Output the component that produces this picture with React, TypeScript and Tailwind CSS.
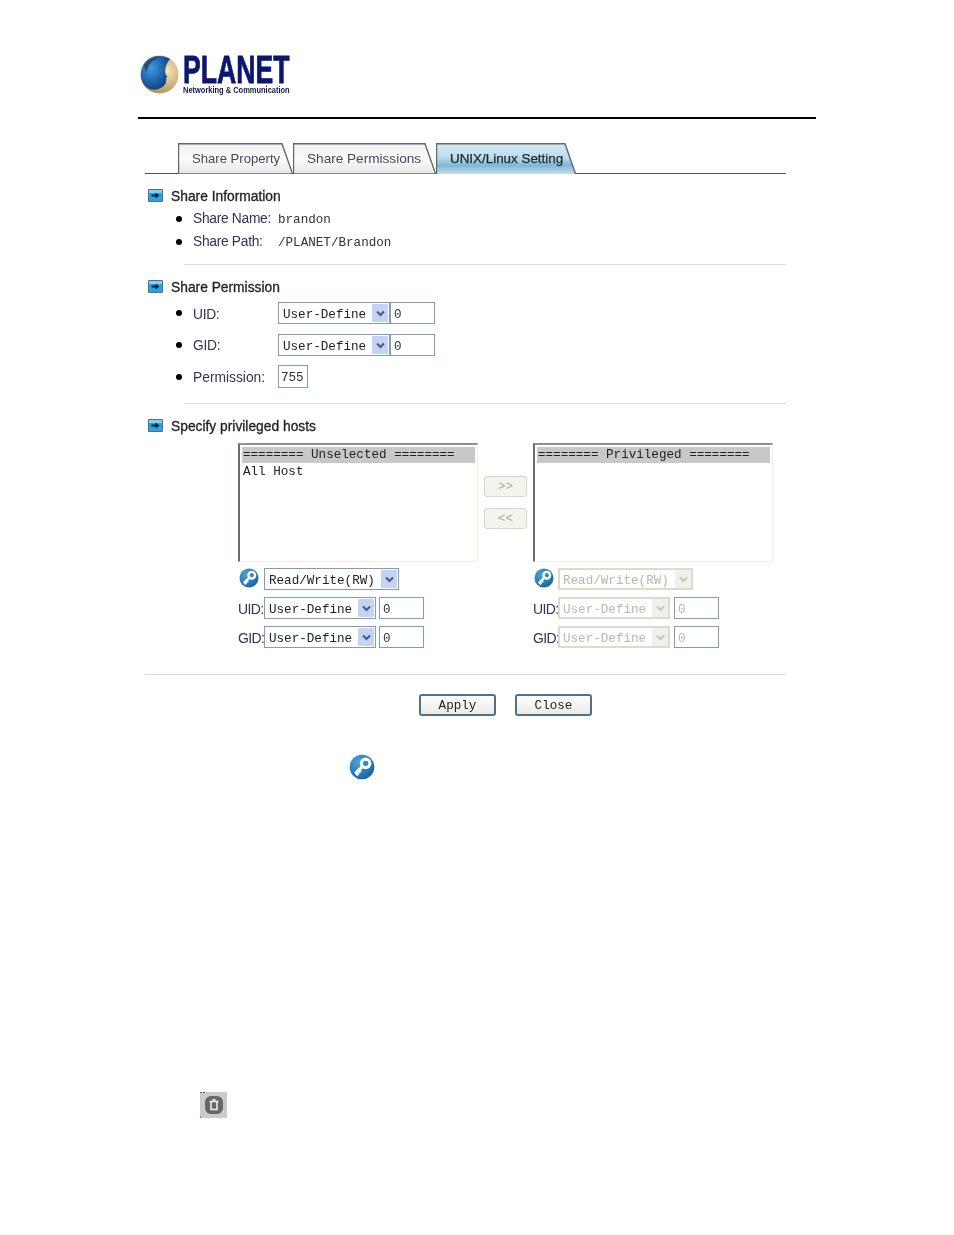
import React from "react";

const mono = "font-['Liberation_Mono',monospace] text-[12.6px]";

function Key({ size = 20, className = "" }: { size?: number; className?: string }) {
  return (
    <svg width={size} height={size} viewBox="0 0 20 20" className={className}>
      <defs>
        <radialGradient id={`k${size}`} cx="35%" cy="30%" r="80%">
          <stop offset="0" stopColor="#4aa3d8" />
          <stop offset="1" stopColor="#0f62a0" />
        </radialGradient>
      </defs>
      <circle cx="10" cy="10" r="9.5" fill={`url(#k${size})`} />
      <circle cx="12.8" cy="7.2" r="3.3" fill="none" stroke="#fff" strokeWidth="2.4" />
      <path d="M10.6 9.3 L4.8 15 M5.4 14.4 L7.2 16.2 M7.4 12.5 L9 14.1" stroke="#fff" strokeWidth="2.4" fill="none" />
    </svg>
  );
}

function HeadIcon() {
  return (
    <svg width="15" height="13" viewBox="0 0 15 13" className="-mt-[2px]">
      <rect x="0" y="0" width="15" height="13" rx="1" fill="#5f6c76" />
      <rect x="1" y="1" width="13" height="11" fill="#25a5e2" />
      <rect x="1" y="1" width="13" height="3" fill="#7fd0f2" />
      <path d="M3.5 5.5 H7.5 V3.5 L11.5 6.5 L7.5 9.5 V7.5 H3.5 Z" fill="#10203a" />
    </svg>
  );
}

function Heading({ children }: { children: React.ReactNode }) {
  return (
    <div className="flex items-center h-5 mt-3 ml-[3px] gap-2 text-[13.8px] text-[#232323] [-webkit-text-stroke:0.3px_#232323]">
      <HeadIcon />
      <span className="pt-[2px]">{children}</span>
    </div>
  );
}

function Row({
  label,
  children,
  className = "",
  labelClass = "",
}: {
  label: string;
  children: React.ReactNode;
  className?: string;
  labelClass?: string;
}) {
  return (
    <div className={`flex items-center ml-[31px] text-[13.8px] text-[#3a2f58] ${className}`}>
      <span className="w-[6px] h-[6px] rounded-full bg-black" />
      <span className={`ml-[11px] w-[85px] shrink-0 ${labelClass}`}>{label}</span>
      {children}
    </div>
  );
}

function Select({ text, width, disabled = false }: { text: string; width: number; disabled?: boolean }) {
  return (
    <div
      style={{ width }}
      className={`flex items-center h-[22px] shrink-0 ${mono} ${
        disabled ? "border-2 border-[#dcdccc] text-[#b8b8b0] pl-[3px]" : "border border-[#7f9db9] text-[#222] pl-[4px] pr-px"
      }`}
    >
      <span className="flex-1 whitespace-pre pt-[4px]">{text}</span>
      <span
        className={`flex items-center justify-center w-[16px] h-[18px] rounded-[1px] ${
          disabled ? "bg-[#f0f0ea]" : "bg-[#c4d2f4]"
        }`}
      >
        <svg width="9" height="7" viewBox="0 0 9 7">
          <path d="M1 1.5 L4.5 5 L8 1.5" fill="none" strokeWidth="2" stroke={disabled ? "#c4c4bc" : "#44598a"} />
        </svg>
      </span>
    </div>
  );
}

function Input({ value, width, className = "", dim = false }: { value: string; width: number; className?: string; dim?: boolean }) {
  return (
    <div
      style={{ width }}
      className={`flex items-center h-[22px] shrink-0 border border-[#7f9db9] pl-[3px] pt-[4px] ${mono} ${
        dim ? "text-[#b8b8b0]" : "text-[#333]"
      } ${className}`}
    >
      {value}
    </div>
  );
}

function Tab({ label, width, size, active = false }: { label: string; width: number; size: string; active?: boolean }) {
  const id = active ? "tabA" : `tab${width}`;
  return (
    <div style={{ width, fontSize: size }} className="relative h-[31px] -mb-px shrink-0">
      <svg width={width} height="31" className="absolute inset-0">
        <defs>
          <linearGradient id={id} x1="0" y1="0" x2="0" y2="1">
            {active ? (
              <>
                <stop offset="0" stopColor="#d4e9f4" />
                <stop offset="0.45" stopColor="#bcdcec" />
                <stop offset="0.72" stopColor="#7fb7d4" />
                <stop offset="1" stopColor="#c6e0ec" />
              </>
            ) : (
              <>
                <stop offset="0" stopColor="#f0f0f0" />
                <stop offset="0.5" stopColor="#fbfbfb" />
                <stop offset="1" stopColor="#e6e6e6" />
              </>
            )}
          </linearGradient>
        </defs>
        <path
          d={`M0.5 31 V0.7 H${width - 11} L${width - 0.7} 30 V31 ${active ? "" : "H0.5"}`}
          fill={`url(#${id})`}
          stroke="#666666"
          strokeWidth="1.4"
        />
      </svg>
      <span
        className={`absolute left-[14px] top-[8px] leading-[16px] whitespace-nowrap ${
          active ? "text-[#1f2430] [-webkit-text-stroke:0.25px_#1f2430]" : "text-[#4a4658]"
        }`}
      >
        {label}
      </span>
    </div>
  );
}

function ListBox({ header, item }: { header: string; item?: string }) {
  return (
    <div
      className={`w-[240px] h-[119px] border-2 border-t-[#8d938d] border-l-[#5f7080] border-r-[#f1efe2] border-b-[#f1efe2] border-r border-b p-[2px] leading-[16px] text-[#222] ${mono}`}
    >
      <div className="bg-[#c8c8c8] h-[16px] pl-px whitespace-pre">{header}</div>
      {item && <div className="pl-px pt-px whitespace-pre">{item}</div>}
    </div>
  );
}

function HostColumn({ dim = false, labelWidth, inputGap }: { dim?: boolean; labelWidth: string; inputGap: string }) {
  return (
    <div className="flex flex-col gap-[7px] mt-[6px]">
      <div className="flex items-center h-[22px]">
        <span className={labelWidth}>
          <Key size={20} className="ml-px -mt-[2px]" />
        </span>
        <Select text="Read/Write(RW)" width={135} disabled={dim} />
      </div>
      {["UID:", "GID:"].map((l) => (
        <div key={l} className="flex items-center h-[22px] text-[14px] text-[#3a2f58]">
          <span className={`${labelWidth} tracking-[-0.6px] mt-[3px] whitespace-nowrap`}>{l}</span>
          <Select text="User-Define" width={112} disabled={dim} />
          <Input value="0" width={45} className={inputGap} dim={dim} />
        </div>
      ))}
    </div>
  );
}

function Button({ label }: { label: string }) {
  return (
    <div
      className={`flex items-center justify-center w-[77px] h-[22px] pt-[2px] rounded-[3px] border-2 border-[#4d7291] bg-gradient-to-b from-white to-[#ecebe3] text-[#222] ${mono}`}
    >
      {label}
    </div>
  );
}

function MoveButton({ label }: { label: string }) {
  return (
    <div
      className={`flex items-center justify-center w-[43px] h-[21px] pt-[2px] rounded-[3px] border border-[#d8d6c8] bg-[#f4f3ec] text-[#a8a8a0] ${mono}`}
    >
      {label}
    </div>
  );
}

export default function App() {
  return (
    <div className="w-[954px] h-[1235px] bg-white pl-[138px] pt-[55px] overflow-hidden font-['Liberation_Sans',Arial,sans-serif] blur-[0.4px]">
      {/* logo */}
      <div className="flex h-[40px] items-start ml-[2px]">
        <svg width="39" height="39" viewBox="0 0 39 39">
          <defs>
            <radialGradient id="gold" cx="70%" cy="40%" r="70%">
              <stop offset="0" stopColor="#f4e6b4" />
              <stop offset="1" stopColor="#a98d4e" />
            </radialGradient>
            <radialGradient id="blue" cx="35%" cy="35%" r="70%">
              <stop offset="0" stopColor="#3f9be0" />
              <stop offset="1" stopColor="#0b3f86" />
            </radialGradient>
          </defs>
          <circle cx="19.5" cy="19.5" r="19" fill="url(#gold)" />
          <path d="M19 1 C8 1 1 9 1 20 C1 27 5 32 10 34 C16 36 22 34 26 28 C25 26 27 25 26 23 C28 22 27 21 26 20 C24 16 26 8 30 4 C27 2 23 1 19 1Z" fill="url(#blue)" />
          <path d="M4 10 C8 4 14 2 20 2 C12 5 8 10 6 18 Z" fill="#2a3a4a" opacity="0.75" />
        </svg>
        <div className="ml-[4px] flex flex-col text-[#0a1670] font-bold">
          <span className="block origin-left scale-x-[0.7] text-[38px] leading-[30px] h-[31px] whitespace-nowrap [-webkit-text-stroke:0.8px_#0a1670]">PLANET</span>
          <span className="block origin-left scale-x-[0.83] text-[9px] leading-[9px] text-[#10184a] whitespace-nowrap">Networking &amp; Communication</span>
        </div>
      </div>

      <div className="w-[678px] h-[2px] bg-black mt-[22px]" />

      <div className="ml-[7px] w-[641px]">
        {/* tabs */}
        <div className="flex items-end h-[30px] mt-[24px] pl-[33px] border-b border-[#555555] box-content">
          <Tab label="Share Property" width={115} size="13.1px" />
          <Tab label="Share Permissions" width={143} size="13.6px" />
          <Tab label="UNIX/Linux Setting" width={140} size="13.4px" active />
        </div>

        <Heading>Share Information</Heading>
        <Row label="Share Name:" className="h-[23px] mt-px tracking-[-0.3px]" labelClass="pt-[2px]">
          <span className={`${mono} text-[#333] pt-[4px] tracking-normal`}>brandon</span>
        </Row>
        <Row label="Share Path:" className="h-[23px] tracking-[-0.3px]" labelClass="pt-[2px]">
          <span className={`${mono} text-[#333] pt-[4px] tracking-normal`}>/PLANET/Brandon</span>
        </Row>
        <div className="ml-[39px] h-px bg-[#dcdcdc] mt-[11px]" />

        <Heading>Share Permission</Heading>
        <Row label="UID:" className="h-[22px] mt-[5px] tracking-[-0.3px]" labelClass="pt-[4px]">
          <div className="flex tracking-normal">
            <Select text="User-Define" width={112} />
            <Input value="0" width={45} />
          </div>
        </Row>
        <Row label="GID:" className="h-[22px] mt-[10px] tracking-[-0.3px]" labelClass="pt-[2px]">
          <div className="flex tracking-normal">
            <Select text="User-Define" width={112} />
            <Input value="0" width={45} />
          </div>
        </Row>
        <Row label="Permission:" className="h-[23px] mt-[9px]" labelClass="pt-[4px]">
          <div className={`flex items-center h-[23px] w-[30px] pl-[2px] pt-[4px] border border-[#7f9db9] text-[#333] ${mono}`}>755</div>
        </Row>
        <div className="ml-[39px] h-px bg-[#dcdcdc] mt-[15px]" />

        <Heading>Specify privileged hosts</Heading>
      </div>

      {/* host lists */}
      <div className="flex ml-[100px] mt-[7px]">
        <div className="flex flex-col w-[240px]">
          <ListBox header="======== Unselected ========" item="All Host" />
          <HostColumn labelWidth="w-[26px]" inputGap="ml-[3px]" />
        </div>
        <div className="flex flex-col gap-[11px] w-[55px] pl-[6px] pt-[33px]">
          <MoveButton label=">>" />
          <MoveButton label="<<" />
        </div>
        <div className="flex flex-col w-[240px]">
          <ListBox header="======== Privileged ========" />
          <HostColumn dim labelWidth="w-[25px]" inputGap="ml-[4px]" />
        </div>
      </div>

      <div className="ml-[7px] w-[641px] h-px bg-[#dcdcdc] mt-[26px]" />

      <div className="flex gap-[19px] ml-[281px] mt-[19px]">
        <Button label="Apply" />
        <Button label="Close" />
      </div>

      <div className="ml-[211px] mt-[38px] h-[26px]">
        <Key size={26} />
      </div>

      <div className="ml-[62px] mt-[312px] w-[27px] h-[26px]">
        <svg width="27" height="26" viewBox="0 0 27 26">
          <rect width="27" height="26" fill="#cbcbcb" />
          <rect x="5" y="4" width="18" height="18" rx="6" fill="#666666" />
          <path d="M9.5 9.5 H18.5 M11 9.5 V17.5 H17 V9.5 M12.5 7.8 H15.5" fill="none" stroke="#f2f2f2" strokeWidth="1.5" />
          <rect x="0" y="0" width="2" height="1" fill="#8a6a4a" />
          <rect x="3" y="0" width="2" height="1" fill="#555555" />
          <rect x="0" y="24" width="1" height="2" fill="#4aa0d8" />
        </svg>
      </div>
    </div>
  );
}
